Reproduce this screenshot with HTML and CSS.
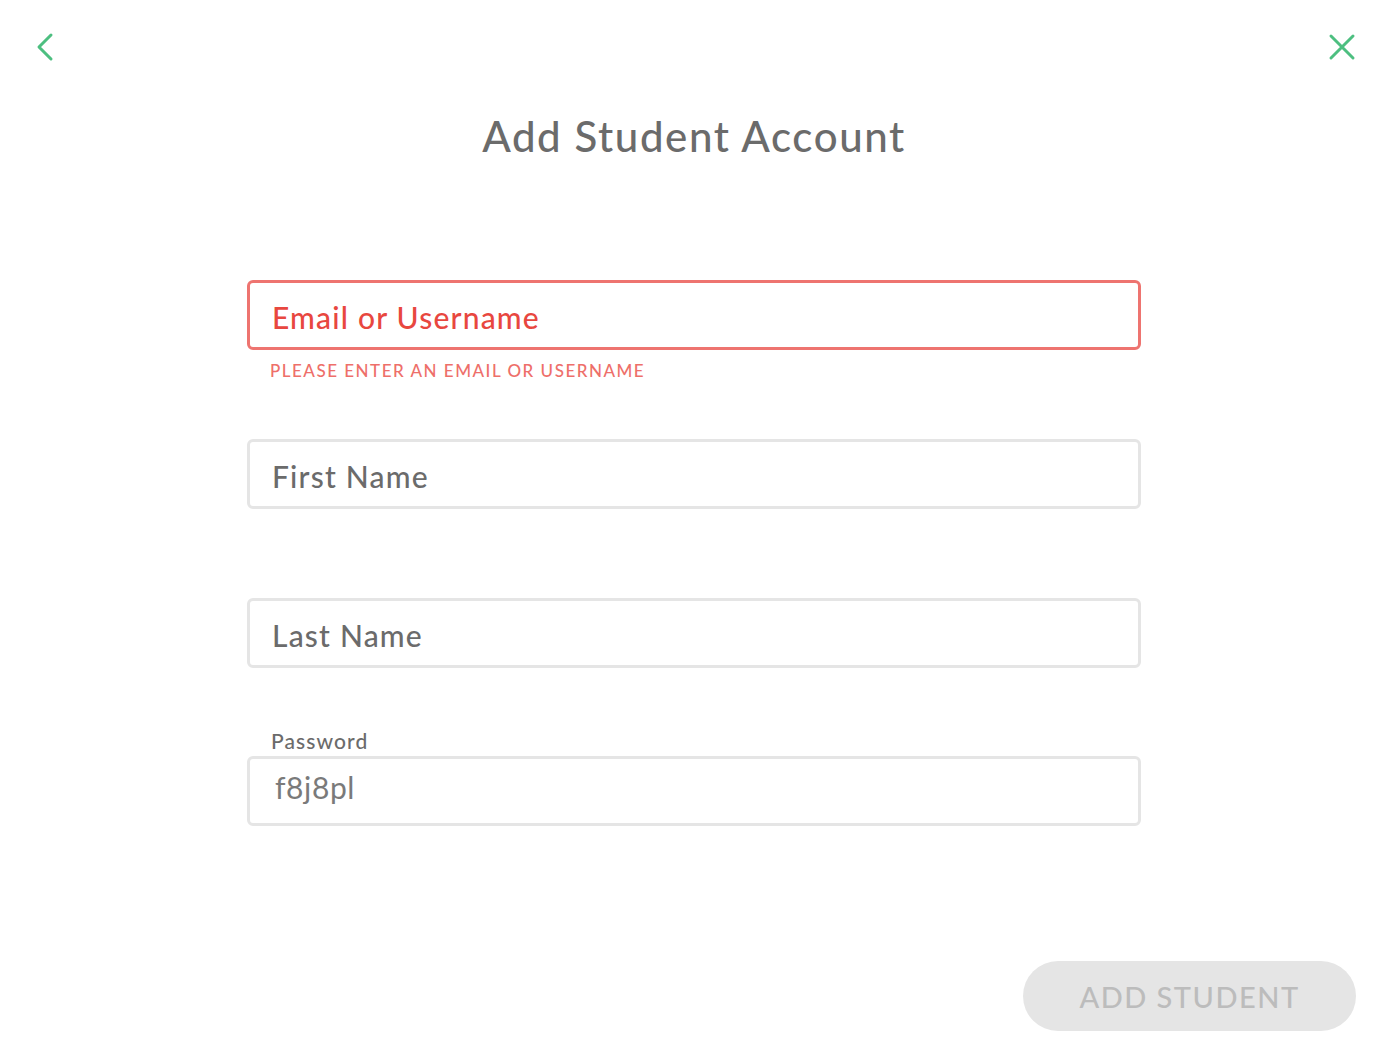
FILE: index.html
```html
<!DOCTYPE html>
<html lang="en">
<head>
  <meta charset="UTF-8">
  <meta name="viewport" content="width=device-width, initial-scale=1.0">
  <title>Add Student Account</title>
  <link rel="stylesheet" href="styles.css">
</head>
<body>
  <div class="topbar">
    <button class="icon-btn" aria-label="Back">
      <svg width="24" height="32" viewBox="0 0 24 32"><path d="M18 4 L6 16 L18 28" fill="none" stroke="#4dbf80" stroke-width="3" stroke-linecap="round" stroke-linejoin="round"/></svg>
    </button>
    <button class="icon-btn" aria-label="Close">
      <svg width="28" height="28" viewBox="0 0 28 28"><path d="M3 3 L25 25 M25 3 L3 25" fill="none" stroke="#4dbf80" stroke-width="3" stroke-linecap="round"/></svg>
    </button>
  </div>

  <h1 class="title">Add Student Account</h1>

  <form class="form">
    <div class="field">
      <input class="input error" type="text" placeholder="Email or Username">
      <div class="error-text">PLEASE ENTER AN EMAIL OR USERNAME</div>
    </div>
    <div class="field">
      <input class="input" type="text" placeholder="First Name">
    </div>
    <div class="field">
      <input class="input" type="text" placeholder="Last Name">
    </div>
    <div class="field password">
      <label class="label" for="pw">Password</label>
      <input class="input value" id="pw" type="text" value="f8j8pl">
    </div>
  </form>

  <div class="footer">
    <button class="submit" disabled>ADD STUDENT</button>
  </div>
</body>
</html>
```

FILE: styles.css
```css
body { margin: 0; background: #fff; font-family: Lato, "Open Sans", sans-serif; color: #6b6b6b; }
.topbar { display: flex; justify-content: space-between; align-items: center; padding: 30px 44px 0 33px; height: 34px; }
.icon-btn { background: none; border: none; padding: 0; cursor: pointer; display: flex; }
.title { margin: 48px 12px 0 0; text-align: center; font-size: 42px; font-weight: 500; letter-spacing: 1.6px; color: #6b6b6b; line-height: 48px; }
.form { width: 894px; margin: 120px 0 0 247px; display: flex; flex-direction: column; }
.field { height: 159px; box-sizing: border-box; position: relative; }
.field.password { margin-top: -27px; height: auto; }
.input { display: block; width: 100%; height: 70px; box-sizing: border-box; border: 3px solid #e5e5e5; border-radius: 6px; padding: 4px 22px 0; font-family: inherit; font-size: 30px; letter-spacing: 1.2px; color: #7a7a7a; outline: none; background: #fff; }
.input::placeholder { color: #6b6b6b; font-weight: 500; }
.input.error { border-color: #ee7470; }
.input.error::placeholder { color: #e8473f; }
.error-text { margin: 10px 0 0 23px; font-size: 17px; letter-spacing: 1.5px; color: #ee6f6a; font-weight: 500; }
.label { display: block; margin: 0 0 5px 24px; font-size: 21px; letter-spacing: 1.1px; color: #6b6b6b; font-weight: 500; height: 21px; line-height: 21px; }
.input.value { font-weight: 400; color: #7a7a7a; padding: 0 22px 8px 25px; font-size: 30px; letter-spacing: 0.6px; }
.footer { display: flex; justify-content: flex-end; padding: 135px 44px 0 0; }
.submit { width: 333px; height: 70px; border: none; border-radius: 35px; background: #e5e5e5; color: #bcbcbc; font-family: inherit; font-size: 29px; font-weight: 500; letter-spacing: 1.5px; }
```
